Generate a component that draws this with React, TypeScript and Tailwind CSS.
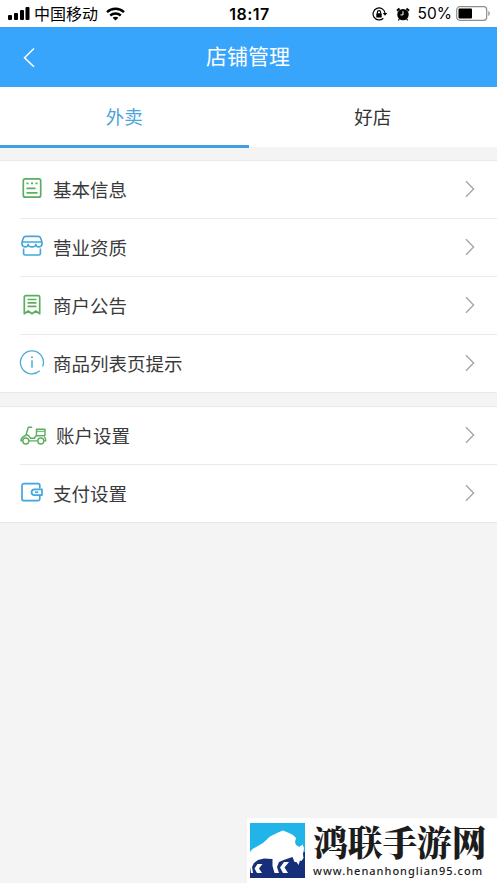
import React from 'react';

interface RowProps {
  icon: React.ReactNode;
  label: string;
  shifted?: boolean;
  last?: boolean;
}

const Chevron = () => (
  <svg width="10" height="18" viewBox="0 0 10 18" fill="none" stroke="#a3a3a3" strokeWidth="1.3">
    <path d="M1 1.2 8.6 9 1 16.8" />
  </svg>
);

const FormIcon = () => (
  <svg className="shrink-0" width="24" height="24" viewBox="0 0 24 24" fill="none" stroke="#5aae5d" strokeWidth="1.7">
    <rect x="3.3" y="1.8" width="17.4" height="18.4" rx="2" />
    <path d="M6.5 6.3h2M11 6.3h2M15.5 6.3h2M6.5 11.3h9M6.5 15.8h11" />
  </svg>
);

const StoreIcon = () => (
  <svg className="shrink-0" width="24" height="24" viewBox="0 0 24 24" fill="none" stroke="#40a6df" strokeWidth="1.6" strokeLinejoin="round">
    <path d="M5.5 1.4h13c1 0 1.5.4 1.9 1.2L22 7v1.8c0 4-6 4-6.200.4-.2 3.600-7.400 3.600-7.600 0C8 12.800 2 12.800 2 8.800V7l1.600-4.400c.4-.8.9-1.200 1.900-1.200z" />
    <path d="M2 7h20M3.600 13.500v5c0 1 .5 1.500 1.500 1.500h13.800c1 0 1.500-.5 1.500-1.500v-5" />
  </svg>
);

const NoticeIcon = () => (
  <svg className="shrink-0" width="24" height="24" viewBox="0 0 24 24" fill="none" stroke="#5aae5d" strokeWidth="1.7" strokeLinejoin="round">
    <path d="M4.300 4.200c0-1 .6-1.600 1.600-1.600h12.200c1 0 1.600.6 1.600 1.600v16.500l-3.900-2.700-3.800 2.700-3.800-2.700-3.900 2.700z" />
    <path d="M7.500 6.500h9M7.500 9.900h9M7.500 13.300h9" />
  </svg>
);

const InfoIcon = () => (
  <svg className="shrink-0" width="26" height="26" viewBox="0 0 26 26" fill="none" stroke="#52a9d8" strokeWidth="1.3">
    <path d="M20.700 20.800A11.500 11.500 0 1 1 23.600 16.600" />
    <path d="M13 10.300v7.500" strokeWidth="1.5" />
    <circle cx="13" cy="7.300" r="1" fill="#52a9d8" stroke="none" />
  </svg>
);

const ScooterIcon = () => (
  <svg className="mt-[2px] ml-[3px] shrink-0" width="27" height="22" viewBox="0 0 27 22" fill="none" stroke="#5aae5d" strokeWidth="1.4" strokeLinejoin="round">
    <path d="M12.200 2.200H8.300L5.800 10.500C2.800 11.500 1 13.500.9 15.900h1.700M8.900 15.900h8.600M24 15.900h1.800c0-2.300-.7-3.400-1.700-4.100M6.600 9.800c2.700.6 3.400 2.700 4 3.500h4c.3-2.200 1.400-2.700 3-2.700h6.800" />
    <rect x="16.500" y="4.200" width="8.500" height="6.400" />
    <path d="M17 6.300h8" strokeWidth="1" />
    <circle cx="5.800" cy="16" r="3" />
    <circle cx="20.800" cy="16" r="3" />
  </svg>
);

const WalletIcon = () => (
  <svg className="shrink-0" width="24" height="24" viewBox="0 0 24 24" fill="none" stroke="#40a6df" strokeWidth="1.7" strokeLinejoin="round">
    <path d="M19.800 7.500V4.300c0-1-.6-1.600-1.600-1.600H4C2.800 2.700 2 3.500 2 4.700v13c0 1.200.8 2 2 2h14.200c1 0 1.600-.6 1.600-1.600v-3.600" />
    <path d="M22 8.300h-7.500a2.900 2.900 0 0 0 0 5.800H22z" />
    <path d="M15 11.200h3.200" />
  </svg>
);

const Row = ({ icon, label, shifted, last }: RowProps) => (
  <div className="ml-5">
    <div className="flex h-[57px] items-center pr-[22px] pb-px">
      <div className="flex w-6 shrink-0 items-center justify-center">{icon}</div>
      <span
        className={`flex-1 text-[18.5px] leading-none whitespace-nowrap text-[#3a3a3a] ${shifted ? 'pl-[12px]' : 'pl-[9px]'}`}
      >
        {label}
      </span>
      <Chevron />
    </div>
    {!last && <div className="h-px bg-[#e9e9e9]" />}
  </div>
);

const StatusBar = () => (
  <div className="flex h-[27px] items-center justify-between bg-white pr-[6px] pl-[8px] text-black">
    <div className="flex w-[200px] items-center">
      <svg width="22" height="13" viewBox="0 0 22 13">
        <rect x="0" y="8" width="4" height="5" rx="1" />
        <rect x="6" y="6" width="4" height="7" rx="1" />
        <rect x="12" y="3" width="4" height="10" rx="1" />
        <rect x="17.500" y="0" width="4" height="13" rx="1" />
      </svg>
      <span className="ml-[4px] pb-px text-[16px] leading-none">中国移动</span>
      <svg className="ml-[8px]" width="19" height="14" viewBox="0 0 19 14" fill="none" stroke="#000" strokeWidth="2.400">
        <path d="M1 5.100C5.700.7 13.300.7 18 5.100M4.200 8.500c3-2.700 7.600-2.700 10.600 0" />
        <path d="M9.500 13.500 6.600 10.700c1.600-1.400 4.200-1.400 5.800 0z" fill="#000" stroke="none" />
      </svg>
    </div>
    <span className="font-[Inter] text-[16px] leading-none font-semibold tracking-[0.5px]">18:17</span>
    <div className="flex w-[200px] items-center justify-end">
      <svg width="16" height="14" viewBox="0 0 16 14" fill="none" stroke="#000" strokeWidth="1.200">
        <path d="M11.300 11.200A6 6 0 1 1 13 6" />
        <path d="M10.700 6h4.600L13 8.800z" fill="#000" stroke="none" />
        <rect x="4.300" y="6.200" width="5.400" height="4.200" rx=".5" fill="#000" stroke="none" />
        <path d="M5.400 6.500V5.200a1.600 1.600 0 0 1 3.200 0v1.300" />
      </svg>
      <svg className="ml-[8px]" width="14" height="14" viewBox="0 0 14 14">
        <circle cx="7" cy="7.600" r="5.700" />
        <path d="m1 3.700 2.500-2.200M13 3.700l-2.500-2.200" stroke="#000" strokeWidth="2" />
        <path d="M3.300 12 2.400 13.300M10.700 12l.9 1.300" stroke="#000" strokeWidth="1.200" />
        <path d="M7 4.200v3.700H4.500" fill="none" stroke="#fff" strokeWidth="1" />
      </svg>
      <span className="ml-[8px] font-[Inter] text-[15.500px] leading-none">50%</span>
      <svg className="ml-[4px]" width="35" height="15" viewBox="0 0 35 15">
        <rect x=".7" y=".7" width="30" height="13.600" rx="3" fill="none" stroke="#8e8e8e" strokeWidth="1.200" />
        <rect x="2.500" y="2.500" width="13.500" height="10" rx="1" />
        <path d="M32.300 5c2 .8 2 4.200 0 5z" fill="#8e8e8e" />
      </svg>
    </div>
  </div>
);

const BisonLogo = () => (
  <svg className="shrink-0" width="55" height="55" viewBox="0 0 55 55">
    <path fill="#20b4e9" d="M0 0h55v55H0z" />
    <path fill="#172e79" d="M0 29h55v26H0z" />
    <path
      fill="#fff"
      d="M0 29 2.500 26 13 20 20 13.500 28 9.500 33 7.500 39 10 43 12 46 15 45 19 46 22 49.500 24 52 20 54 25 53 31 53.500 35 51.500 38 50 37.500 48.500 42 46.500 39 44.500 39 42.500 34 35 36.500 29 39 27 44 29 50H24.500L22.500 43 22.500 36 14 35.500 8 37 4 40 2 44 3 50H1L0 44z"
    />
    <path fill="#fff" d="M7.500 41h5L9 45.500 12 50H7L4.500 45.500zM34 39h5L34.500 44.500 38 50H33L30 44.500z" />
    <path fill="#20b4e9" d="M49.500 13 46 17.500 47.500 20 49 23.500 52.500 22 52.500 18 49 16.500z" />
  </svg>
);

const Watermark = () => (
  <div className="absolute right-0 bottom-0 flex h-[65px] w-[250px] bg-white pt-[5px] pl-[3px]">
    <BisonLogo />
    <div className="ml-[8px] text-[#1c1c1c]">
      <div className="h-[42px] font-['Noto_Serif_CJK_SC','Noto_Sans_CJK_SC',serif] text-[34.700px] leading-[37px] font-black whitespace-nowrap">
        鸿联手游网
      </div>
      <div className="font-['Noto_Sans'] text-[11px] leading-[11px] font-medium tracking-[1px] whitespace-nowrap">
        www.henanhonglian95.com
      </div>
    </div>
  </div>
);

export default function App() {
  return (
    <div className="relative h-[883px] w-[497px] overflow-hidden bg-[#f4f4f4] font-['Noto_Sans_CJK_SC',sans-serif]">
      <StatusBar />
      <header className="flex h-[60px] items-center bg-[#37a5fb] text-white">
        <svg className="ml-[23px]" width="12" height="20" viewBox="0 0 12 20" fill="none" stroke="#fff" strokeWidth="1.500">
          <path d="M11 1.500 1.500 10.700 11 19.900" />
        </svg>
        <h1 className="flex-1 pr-[36px] pb-[3px] text-center text-[21px] leading-none font-normal">店铺管理</h1>
      </header>
      <nav className="grid h-[60px] grid-cols-2 bg-white text-center text-[18.500px] leading-[58px]">
        <div className="border-b-[3px] border-[#429fe2] text-[#4ba3d9]">外卖</div>
        <div className="text-[#333]">好店</div>
      </nav>
      <section className="mt-[13px] border-y border-[#e9e9e9] bg-white">
        <Row icon={<FormIcon />} label="基本信息" />
        <Row icon={<StoreIcon />} label="营业资质" />
        <Row icon={<NoticeIcon />} label="商户公告" />
        <Row icon={<InfoIcon />} label="商品列表页提示" last />
      </section>
      <section className="mt-[13px] border-y border-[#e9e9e9] bg-white">
        <Row icon={<ScooterIcon />} label="账户设置" shifted />
        <Row icon={<WalletIcon />} label="支付设置" last />
      </section>
      <Watermark />
    </div>
  );
}
